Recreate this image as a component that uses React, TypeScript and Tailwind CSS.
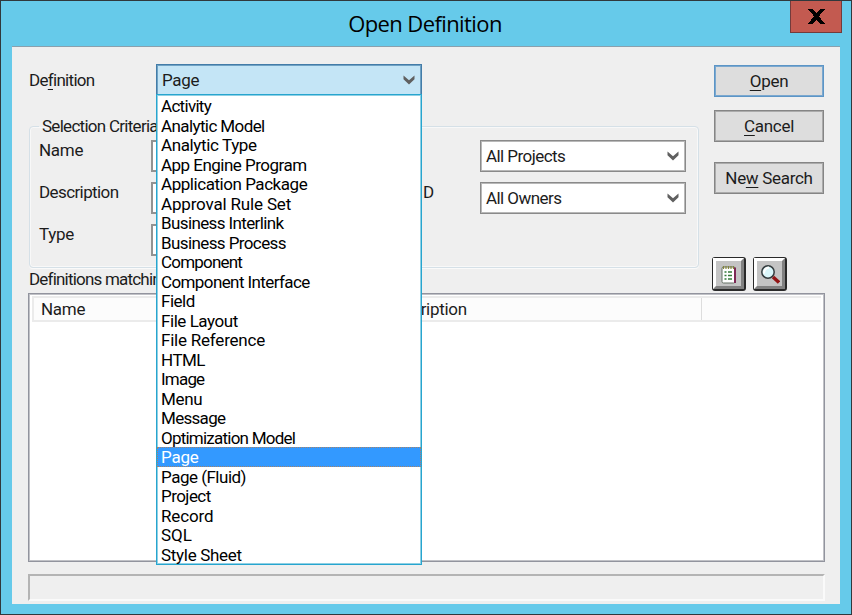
import type { ReactNode } from 'react';

const definitionTypes = [
  { label: 'Activity', spacing: 'tracking-[-0.7px]' },
  { label: 'Analytic Model', spacing: 'tracking-[-0.6px]' },
  { label: 'Analytic Type', spacing: 'tracking-[-0.38px]' },
  { label: 'App Engine Program', spacing: 'tracking-[-0.52px]' },
  { label: 'Application Package', spacing: 'tracking-[-0.45px]' },
  { label: 'Approval Rule Set', spacing: 'tracking-[-0.17px]' },
  { label: 'Business Interlink', spacing: 'tracking-[-0.62px]' },
  { label: 'Business Process', spacing: 'tracking-[-0.6px]' },
  { label: 'Component', spacing: 'tracking-[-0.8px]' },
  { label: 'Component Interface', spacing: 'tracking-[-0.6px]' },
  { label: 'Field', spacing: 'tracking-[-0.5px]' },
  { label: 'File Layout', spacing: 'tracking-[-0.45px]' },
  { label: 'File Reference', spacing: 'tracking-[-0.22px]' },
  { label: 'HTML', spacing: 'tracking-[-0.5px]' },
  { label: 'Image', spacing: 'tracking-[-0.8px]' },
  { label: 'Menu', spacing: 'tracking-[-0.3px]' },
  { label: 'Message', spacing: 'tracking-[-0.7px]' },
  { label: 'Optimization Model', spacing: 'tracking-[-0.77px]' },
  { label: 'Page', spacing: 'tracking-[-0.2px]' },
  { label: 'Page (Fluid)', spacing: 'tracking-[-0.5px]' },
  { label: 'Project', spacing: 'tracking-[-0.55px]' },
  { label: 'Record', spacing: 'tracking-[-0.15px]' },
  { label: 'SQL', spacing: 'tracking-[0px]' },
  { label: 'Style Sheet', spacing: 'tracking-[-0.3px]' },
];

function Chevron() {
  return (
    <svg width="12" height="10" viewBox="0 0 12 10" className="shrink-0">
      <path d="M.5 .5 6 5.2 11.5 .5V4.2L6 9.5 .5 4.2Z" fill="#606060" />
    </svg>
  );
}

function Combo({ children }: { children: ReactNode }) {
  return (
    <div className="flex h-8 w-[206px] items-center justify-between border border-[#8a8a8a] bg-white pr-[6px] pl-[5px] shadow-[inset_0_0_0_1px_#b8b8b8]">
      <span className="tracking-[-0.55px]">{children}</span>
      <Chevron />
    </div>
  );
}

function PushButton({ children, primary = false }: { children: ReactNode; primary?: boolean }) {
  return (
    <button
      className={`flex h-8 w-[110px] items-center justify-center border bg-[#dddddd] ${
        primary
          ? 'border-[#5c95c6] shadow-[inset_0_0_0_1px_#7ba8cf]'
          : 'border-[#858585] shadow-[inset_0_0_0_1px_#ababab]'
      }`}
    >
      <span>{children}</span>
    </button>
  );
}

function Key({ children }: { children: ReactNode }) {
  return <span className="underline decoration-1 underline-offset-[3px]">{children}</span>;
}

function ToolButton({ children }: { children: ReactNode }) {
  return (
    <button className="h-[34px] w-[34px] rounded-[3px] border-[1.5px] border-r-2 border-b-2 border-[#292929]">
      <span className="flex h-full w-full items-center justify-center border-[3px] border-t-white border-r-[#818181] border-b-[#818181] border-l-white bg-[#c4c4c4]">
        {children}
      </span>
    </button>
  );
}

export default function App() {
  return (
    <div className="flex h-[615px] w-[852px] flex-col overflow-hidden border border-[#30383c] bg-[#66caea] font-['Roboto','Liberation_Sans',sans-serif] text-[17px] leading-5 tracking-[-0.3px] whitespace-nowrap text-[#1c1c1c]">
      <header className="flex h-[45px] shrink-0 items-start">
        <div className="w-[52px]" />
        <h1 className="flex-1 pt-[7px] pr-[6px] pl-[13px] text-center font-['Open_Sans','Noto_Sans',sans-serif] text-[22px] leading-[30px] tracking-[-0.6px] text-black">
          Open Definition
        </h1>
        <button className="mr-[9px] flex h-8 w-[52px] items-center justify-center border border-t-0 border-[#733b3b] bg-[#c35a50]">
          <svg width="17" height="15" viewBox="0 0 17 15" shapeRendering="crispEdges">
            <path d="M0 0h5l3.5 4L12 0h5l-6 7.3L17 15h-5l-3.5-4.5L5 15H0l6-7.7Z" fill="#000" />
          </svg>
        </button>
      </header>

      <main className="mx-[11px] flex h-[558px] w-[828px] flex-col border-t border-[#8aa0ad] bg-[#efefef] pl-4">
        <div className="flex h-[210px]">
          <div className="w-[686px] pt-[17px]">
            <div className="flex h-8">
              <div className="w-[128px] pt-[6px] pl-[1px] tracking-[-0.7px]">
                De<Key>f</Key>inition
              </div>
              <div className="relative z-10 w-[266px]">
                <div className="flex h-8 items-center justify-between border border-b-0 border-[#437ca8] bg-[#c4e5f6] pr-[6px] pb-px pl-[5px] shadow-[inset_0_0_0_1px_#6fa2c4]">
                  <span>Page</span>
                  <Chevron />
                </div>
                <ul className="absolute top-[30px] left-0 h-[471px] w-[266px] border border-[#27a5cf] bg-white pt-px shadow-[inset_0_0_0_1px_#8fd0e4]">
                  {definitionTypes.map(({ label, spacing }) => (
                    <li
                      key={label}
                      className={`h-[19.5px] pl-[4px] leading-[20.5px] ${spacing} ${
                        label === 'Page'
                          ? 'bg-[#3399ff] text-white outline-1 -outline-offset-1 outline-[#a58269] outline-dotted'
                          : 'text-black'
                      }`}
                    >
                      {label}
                    </li>
                  ))}
                </ul>
              </div>
            </div>

            <fieldset className="mt-[20px] ml-[1px] flex h-[152px] w-[670px] flex-col rounded-[4px] border border-[#d5e0e7] px-px shadow-[inset_0_0_0_1px_#f8f8f8,0_1px_0_#fafafa]">
              <legend className="ml-[8px] h-5 px-[3px] tracking-[-0.72px]">Selection Criteria</legend>
              <div className="mt-[4px] flex h-[42px]">
                <span className="w-[120px] pl-2">Name</span>
                <div className="h-8 w-[206px] border-2 border-[#929292] bg-white" />
                <span className="w-[123px]" />
                <Combo>All Projects</Combo>
              </div>
              <div className="flex h-[42px]">
                <span className="w-[120px] pl-2 tracking-[-0.6px]">Description</span>
                <div className="h-8 w-[206px] border-2 border-[#929292] bg-white" />
                <span className="w-[123px] pl-[66px]">D</span>
                <Combo>All Owners</Combo>
              </div>
              <div className="flex h-[32px]">
                <span className="w-[120px] pl-2">Type</span>
                <div className="h-8 w-[206px] border-2 border-[#929292] bg-white" />
              </div>
            </fieldset>
          </div>

          <div className="flex flex-col pt-[18px]">
            <PushButton primary>
              <Key>O</Key>pen
            </PushButton>
            <div className="h-[13px]" />
            <PushButton>
              <Key>C</Key>ancel
            </PushButton>
            <div className="h-[20px]" />
            <PushButton>
              Ne<Key>w</Key> Search
            </PushButton>
          </div>
        </div>

        <div className="flex h-[36px]">
          <span className="w-[684px] pt-[12px] pl-[1px] tracking-[-0.8px]">Definitions matching</span>
          <div className="flex gap-[7px]">
            <ToolButton>
              <svg width="16" height="20" viewBox="0 0 16 20">
                <rect x="1" y="3" width="13" height="16" rx="1.5" fill="#fff" stroke="#657165" />
                <path d="M14 3.5V19" stroke="#7d2754" strokeWidth="2" />
                <path d="M2.5 2v3M5 2v3M7.5 2v3M10 2v3M12.5 2v3" stroke="#85853d" strokeWidth="1.2" />
                <path d="M3.5 8h2M3.5 11.5h2M3.5 15h2M7 8h4M7 11.5h4M7 15h4" stroke="#347b38" strokeWidth="1.6" />
              </svg>
            </ToolButton>
            <ToolButton>
              <svg width="20" height="20" viewBox="0 0 20 20">
                <circle cx="8" cy="8" r="6.2" fill="#daf6fa" stroke="#343b3d" strokeWidth="1.5" />
                <path d="M4 9.5C4 6 6 4 9 3.5" stroke="#fff" strokeWidth="2" fill="none" />
                <path d="m13 13 6 5.5" stroke="#921515" strokeWidth="3.5" />
              </svg>
            </ToolButton>
          </div>
        </div>

        <section className="flex h-[269px] w-[797px] shrink-0 flex-col border border-[#92949e] bg-white px-[3px] pt-[2px] shadow-[inset_0_0_0_1px_#c0c1c6]">
          <div className="flex h-[26px] border-2 border-r-0 border-[#ebebeb] bg-[#fcfcfc] pt-px">
            <span className="w-[321px] pl-[7px]">Name</span>
            <span className="w-[346px] pl-[29px] tracking-[-0.3px]">Description</span>
            <span className="-mt-px w-px bg-[#dddddd]" />
          </div>
        </section>
        <footer className="mt-[12px] h-[27px] w-[797px] shrink-0 border-2 border-t-[#b4b4b4] border-r-[#fafafa] border-b-[#fafafa] border-l-[#b4b4b4]" />
      </main>
    </div>
  );
}
